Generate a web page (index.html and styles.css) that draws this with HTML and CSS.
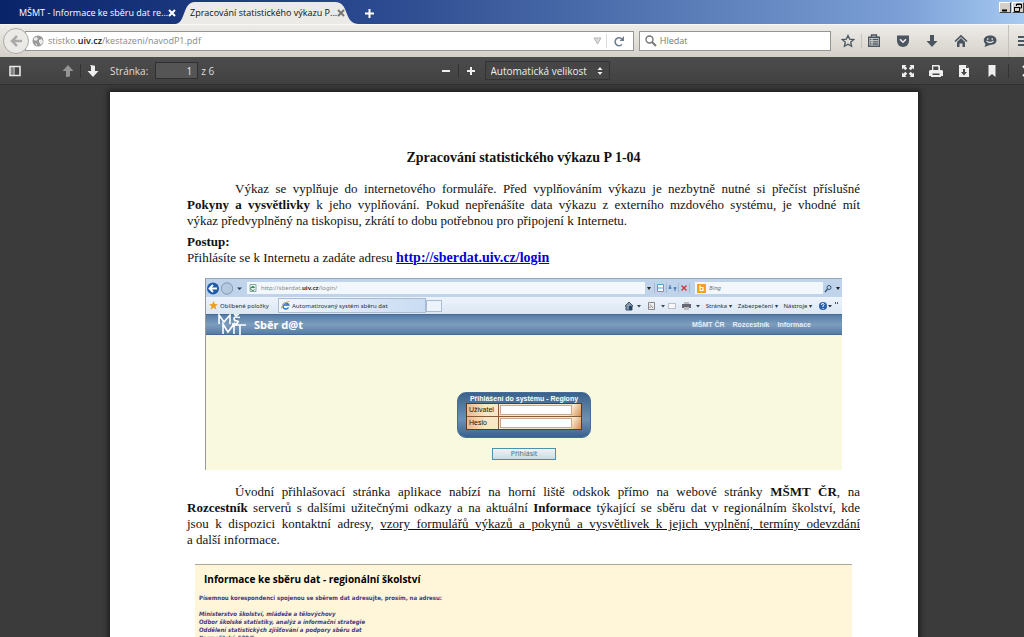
FILE: index.html
```html
<!DOCTYPE html>
<html lang="cs">
<head>
<meta charset="utf-8">
<title>Zpracování statistického výkazu P 1-04</title>
<link rel="stylesheet" href="styles.css">
</head>
<body>
<header class="tabs">
  <div class="tab tab-back"><span class="tab-title">MŠMT - Informace ke sběru dat re...</span><button class="tab-close" aria-label="Zavřít panel"><svg width="8" height="8" viewBox="0 0 8 8"><path d="M1 1l6 6M7 1L1 7" stroke="currentColor" stroke-width="2"/></svg></button></div>
  <div class="tab tab-active">
    <svg class="tab-shape" viewBox="0 0 190 24" preserveAspectRatio="none"><path d="M0 24C11 24 7 2 20 2H160C175 2 168 24 184 24Z" fill="#eceae6"/></svg>
    <span class="tab-title">Zpracování statistického výkazu P...</span><button class="tab-close" aria-label="Zavřít panel"><svg width="8" height="8" viewBox="0 0 8 8"><path d="M1 1l6 6M7 1L1 7" stroke="currentColor" stroke-width="2"/></svg></button>
  </div>
  <button class="tab-new" aria-label="Nový panel"><svg width="9" height="9" viewBox="0 0 9 9"><path d="M4.500 0v9M0 4.500h9" stroke="#fff" stroke-width="2"/></svg></button>
  <div class="window-buttons">
    <button aria-label="Minimalizovat"><svg width="10" height="9" viewBox="0 0 10 9"><path d="M2 7.500h5" stroke="#000" stroke-width="2"/></svg></button>
    <button aria-label="Obnovit"><svg width="10" height="9" viewBox="0 0 10 9"><path d="M3.500 3V1h5v4h-2M3 1.500h6M1.500 4.500h5v4h-5zM1 4.500h6" fill="none" stroke="#000"/></svg></button>
  </div>
</header>

<nav class="navbar">
  <button class="back" aria-label="Zpět"><svg width="14" height="14" viewBox="0 0 14 14"><path d="M8 2L3 7l5 5M3 7h10" fill="none" stroke="#aaa" stroke-width="2.500"/></svg></button>
  <div class="urlbar">
    <svg width="12" height="12" viewBox="0 0 12 12"><circle cx="6" cy="6" r="5.500" fill="#999"/><path d="M2 3l3-1 1 2-2 2-2-1zM7 5l3-1 1 3-2 3-2-3zM3 8l2 1v2z" fill="#eee"/></svg>
    <span class="url">stistko.<b>uiv.cz</b>/kestazeni/navodP1.pdf</span>
    <svg class="drop" width="9" height="8" viewBox="0 0 9 8"><path d="M1 1h7L4.500 7z" fill="#ddd" stroke="#b5b5b5"/></svg>
    <button class="reload" aria-label="Obnovit stránku"><svg width="11" height="11" viewBox="0 0 11 11"><path d="M8 8.500A4 4 0 1 1 8 3" fill="none" stroke="#6f7f8f" stroke-width="1.600"/><path d="M10 0v5H5.500z" fill="#6f7f8f"/></svg></button>
  </div>
  <label class="search"><svg width="12" height="12" viewBox="0 0 12 12"><circle cx="4.500" cy="4.500" r="3.500" fill="none" stroke="#777" stroke-width="1.400"/><path d="M7 7l4 4" stroke="#777" stroke-width="2"/></svg><input type="text" placeholder="Hledat" aria-label="Hledat"></label>
  <div class="tools">
    <button aria-label="Záložka"><svg width="14" height="14" viewBox="0 0 14 14"><path d="M7 1.500l1.700 3.700 4 .4-3 2.700.9 4L7 10.200l-3.600 2.100.9-4-3-2.700 4-.4z" fill="none" stroke="#4a5560" stroke-width="1.300"/></svg></button>
    <button class="ruled" aria-label="Seznam záložek"><svg width="14" height="14" viewBox="0 0 14 14"><path d="M4.500 3V1h5v2M1.700 3.200h10.600v9H1.700z" fill="none" stroke="#4a5560" stroke-width="1.400"/><path d="M3 5.500h1.500M3 7.800h1.500M3 10h1.500M5.500 5.500H11M5.500 7.800H11M5.500 10H11" stroke="#4a5560" stroke-width="1.300"/></svg></button>
    <button aria-label="Pocket"><svg width="14" height="14" viewBox="0 0 14 14"><path d="M1 1.500h12V7a6 6 0 0 1-12 0z" fill="#4a5560"/><path d="M4 5.200l3 3 3-3" fill="none" stroke="#eee" stroke-width="1.600"/></svg></button>
    <button aria-label="Stahování"><svg width="14" height="14" viewBox="0 0 14 14"><path d="M5 1h4v6h3.500L7 13 1.500 7H5z" fill="#4a5560"/></svg></button>
    <button aria-label="Domů"><svg width="14" height="14" viewBox="0 0 14 14"><path d="M1 7.500L7 1.800l6 5.700" fill="none" stroke="#4a5560" stroke-width="1.700"/><path d="M3 8l4-4 4 4v5H8.500V9.500h-3V13H3z" fill="#4a5560"/></svg></button>
    <button aria-label="Hello"><svg width="14" height="14" viewBox="0 0 14 14"><path d="M7 1.500c4 0 6.500 2 6.500 4.800S11 11 7 11L1.500 13 2.500 10C-1 6.500 1 1.500 7 1.500z" fill="#4a5560"/><path d="M3.500 7q3.500 3 7 0" fill="none" stroke="#ddd" stroke-width="1.300"/><path d="M4 5h1.500M8.500 5H10" stroke="#ddd" stroke-width="1.300"/></svg></button>
    <button class="ruled menu" aria-label="Nabídka"><svg width="14" height="14" viewBox="0 0 14 14"><path d="M0 3h14M0 7h14M0 11h14" stroke="#4a5560" stroke-width="2"/></svg></button>
  </div>
</nav>

<div class="pdfbar">
  <div class="pdf-group">
    <button aria-label="Postranní lišta"><svg width="12" height="12" viewBox="0 0 12 12"><path d="M1 1.500h10v9H1z" fill="none" stroke="#e6e6e6" stroke-width="1.600"/><path d="M5 1v10" stroke="#e6e6e6"/><path d="M2 3h2M2 5h2M2 7h2M2 9h2" stroke="#bbb"/></svg></button>
    <button class="prev" aria-label="Předchozí"><svg width="12" height="12" viewBox="0 0 12 12"><path d="M6 0l5.500 6H8v4.500q0 1.500-4 1.500V6H.5z" fill="#949494"/></svg></button>
    <button class="split" aria-label="Další"><svg width="12" height="12" viewBox="0 0 12 12"><path d="M6 12l5.500-6H8V1.500Q8 0 3 0q1 1 1 2v4H.5z" fill="#eee"/></svg></button>
    <label for="page-no">Stránka:</label>
    <input id="page-no" type="text" value="1">
    <span>z 6</span>
  </div>
  <div class="pdf-group zoom">
    <button aria-label="Zmenšit"><svg width="10" height="10" viewBox="0 0 10 10"><path d="M1 5h8" stroke="#eee" stroke-width="2"/></svg></button>
    <button class="split" aria-label="Zvětšit"><svg width="10" height="10" viewBox="0 0 10 10"><path d="M1 5h8M5 1v8" stroke="#eee" stroke-width="2"/></svg></button>
    <div class="select-wrap"><select aria-label="Velikost"><option>Automatická velikost</option></select><svg width="6" height="8" viewBox="0 0 6 8"><path d="M3 0l2.500 3h-5zM3 8L.5 5h5z" fill="#eee"/></svg></div>
  </div>
  <div class="pdf-group right">
    <button aria-label="Režim prezentace"><svg width="14" height="14" viewBox="0 0 14 14"><path d="M1 1h4.500L4.200 2.300l2 2-1.900 1.900-2-2L1 5.500zM13 1H8.500l1.300 1.300-2 2 1.900 1.900 2-2L13 5.500zM1 13h4.500l-1.300-1.300 2-2-1.900-1.900-2 2L1 8.500zM13 13H8.500l1.300-1.300-2-2 1.900-1.900 2 2L13 8.500z" fill="#eee"/></svg></button>
    <button aria-label="Tisk"><svg width="14" height="14" viewBox="0 0 14 14"><path d="M3 1h7l1 1v4h2l1 1v5h-2v1H2v-1H0V7l1-1h2z" fill="#eee"/><path d="M4.300 2.500h5V6h-5zM3.500 9.500h7v1.500h-7z" fill="#484848"/></svg></button>
    <button aria-label="Stáhnout"><svg width="14" height="14" viewBox="0 0 14 14"><path d="M2 1h7l3 3v9H2z" fill="#eee"/><path d="M9 1v3h3M6 5h2v3h2l-3 3.500L4 8h2z" fill="#484848"/></svg></button>
    <button aria-label="Aktuální pohled"><svg width="14" height="14" viewBox="0 0 14 14"><path d="M3.500 1h7v12L7 10l-3.500 3z" fill="#eee"/></svg></button>
    <button class="more split" aria-label="Nástroje"><svg width="14" height="14" viewBox="0 0 14 14"><path d="M2 2l5 5-5 5M8 2l5 5-5 5" fill="none" stroke="#eee" stroke-width="2"/></svg></button>
  </div>
</div>

<main class="viewer">
  <article class="page">
    <h1>Zpracování statistického výkazu P 1-04</h1>
    <p class="para">
      <span class="line indent">Výkaz se vyplňuje do internetového formuláře. Před vyplňováním výkazu je nezbytně nutné si přečíst příslušné</span>
      <span class="line"><b>Pokyny a vysvětlivky</b> k jeho vyplňování. Pokud nepřenášíte data výkazu z externího mzdového systému, je vhodné mít</span>
      <span class="line last">výkaz předvyplněný na tiskopisu, zkrátí to dobu potřebnou pro připojení k Internetu.</span>
    </p>
    <p class="steps"><b>Postup:</b><br>Přihlásíte se k Internetu a zadáte adresu <a href="http://sberdat.uiv.cz/login">http://sberdat.uiv.cz/login</a></p>

    <section class="shot">
      <div class="ie-top">
        <svg width="40" height="13" viewBox="0 0 40 13"><circle cx="7" cy="6.500" r="6" fill="#1f5ba9"/><path d="M7 3L3.500 6.500 7 10M4 6.500h7" fill="none" stroke="#fff" stroke-width="1.800"/><circle cx="21" cy="6.500" r="5.700" fill="#b5c9df" stroke="#8299b5"/><path d="M31 5.500h5L33.500 8z" fill="#245"/></svg>
        <div class="ie-address"><svg width="8" height="8" viewBox="0 0 8 8"><path d="M1 .5h6v7H1z" fill="#e9f2ea" stroke="#8aa"/><path d="M5.500 5.500a2 2 0 1 1 0-2H2" fill="none" stroke="#3a8a5a"/></svg><span>http://sberdat.<b>uiv.cz</b>/login/</span></div>
        <svg width="44" height="10" viewBox="0 0 44 10"><path d="M1 4h4L3 7z" fill="#222"/><path d="M8.500 0v10M20.500 0v10M32.500 0v10M43.500 0v10" stroke="#a9bace"/><path d="M11.500 1.500h6v7h-6zM12 5h5" fill="#fff" stroke="#5aa0c8"/><path d="M24 2v4M22.500 5h3M29 8V4M27.500 5h3" stroke="#2b68a8"/><path d="M35.500 2.500l5 5M40.500 2.500l-5 5" stroke="#c33" stroke-width="1.300"/></svg>
        <div class="ie-search"><svg width="9" height="9" viewBox="0 0 9 9"><path d="M0 0h9v9H0z" fill="#f3a21c"/><path d="M3 1.500v5h3v-3H3" fill="none" stroke="#fff" stroke-width="1.200"/></svg><i>Bing</i></div>
        <svg width="18" height="9" viewBox="0 0 18 9"><circle cx="5" cy="3.500" r="2" fill="none" stroke="#357"/><path d="M3.500 5L1 8" stroke="#357" stroke-width="1.300"/><path d="M12 3h4l-2 3z" fill="#222"/></svg>
      </div>
      <div class="ie-tabs">
        <svg width="9" height="9" viewBox="0 0 9 9"><path d="M4.500 0l1.300 3 3.200.2-2.500 2 .8 3.300-2.800-1.800-2.800 1.800.8-3.300L0 3.200 3.200 3z" fill="#eda023"/></svg>
        <span class="ie-fav">Oblíbené položky</span>
        <div class="ie-tab"><svg width="9" height="9" viewBox="0 0 9 9"><path d="M7.500 6.500a3 3 0 1 1 .2-2.500H2" fill="none" stroke="#2878c0" stroke-width="1.500"/><path d="M0 8Q1 2 9 0" fill="none" stroke="#e5b93f"/></svg>Automatizovaný systém sběru dat</div>
        <div class="ie-blank"></div>
        <svg class="ie-icons" width="76" height="10" viewBox="0 0 76 10"><path d="M1 5l4-4 4 4H8v4H2V5z" fill="#8396ad" stroke="#456"/><path d="M5 5h3v4H5z" fill="#246"/><path d="M13 4h4l-2 2.500zM37 4h4l-2 2.500zM72 4h4l-2 2.500z" fill="#345"/><path d="M24.500 1.500h6v7h-6z" fill="#eee" stroke="#888"/><path d="M26 7V5.500M26 3.500l3 3.500" stroke="#888"/><path d="M44.500 2.500h7v5h-7z" fill="#f7f7f7" stroke="#bbc"/><path d="M58 3h9v4h-9z" fill="#667"/><path d="M60 1h5v2h-5zM60 6h5v3h-5z" fill="#bbb"/></svg>
        <span>Stránka ▾</span><span>Zabezpečení ▾</span><span>Nástroje ▾</span>
        <svg width="22" height="10" viewBox="0 0 22 10"><circle cx="5" cy="5" r="4" fill="#2d61a8"/><path d="M3.500 4q0-2 1.700-1.700Q7 3 5 5v1M5 7v1" fill="none" stroke="#fff"/><path d="M10 4h4l-2 2.500z" fill="#234"/><path d="M17 1l1 1-1 1M19 1l1 1-1 1" fill="none" stroke="#456"/></svg>
      </div>
      <div class="site-bar">
        <svg width="32" height="21" viewBox="0 0 32 21"><path d="M2 10V1l5 7 6-7v9M23 3.500q-6-1.500-6 1t3 2.500-1 3h-4M17 0l2 1.500L22 0M6 20V10l5 8 6-8v10M17 11h12M23 11v10" fill="none" stroke="#fff" stroke-width="1.600"/></svg>
        <strong>Sběr d@t</strong>
        <div class="site-links"><span>MŠMT ČR</span><span>Rozcestník</span><span>Informace</span></div>
      </div>
      <form class="login">
        <div class="login-box">
          <div class="login-title">Přihlášení do systému - Regiony</div>
          <div class="login-grid">
            <label for="user">Uživatel</label><div class="cell"><input id="user" type="text"></div>
            <label for="pass">Heslo</label><div class="cell"><input id="pass" type="password"></div>
          </div>
        </div>
        <button type="button" class="submit">Přihlásit</button>
      </form>
    </section>

    <p class="para after">
      <span class="line indent">Úvodní přihlašovací stránka aplikace nabízí na horní liště odskok přímo na webové stránky <b>MŠMT ČR</b>, na</span>
      <span class="line"><b>Rozcestník</b> serverů s dalšími užitečnými odkazy a na aktuální <b>Informace</b> týkající se sběru dat v regionálním školství, kde</span>
      <span class="line">jsou k dispozici kontaktní adresy, <u>vzory formulářů výkazů a pokynů a vysvětlivek k jejich vyplnění, termíny odevzdání</u></span>
      <span class="line last">a další informace.</span>
    </p>

    <section class="info">
      <h2>Informace ke sběru dat - regionální školství</h2>
      <p class="lead">Písemnou korespondenci spojenou se sběrem dat adresujte, prosím, na adresu:</p>
      <address>Ministerstvo školství, mládeže a tělovýchovy<br>Odbor školské statistiky, analýz a informační strategie<br>Oddělení statistických zjišťování a podpory sběru dat<br>Karmelitská 529/5</address>
    </section>
  </article>
</main>
</body>
</html>
```

FILE: styles.css
```css
* { box-sizing: border-box; }
body {
  margin: 0;
  height: 100vh;
  display: flex;
  flex-direction: column;
  overflow: hidden;
  font: 9px/12px "Open Sans", "Noto Sans", sans-serif;
  color: #222;
}
svg { display: block; flex: none; }
button { display: flex; align-items: center; justify-content: center; padding: 0; border: 0; background: none; color: inherit; font: inherit; flex: none; }
input, select { font: inherit; color: inherit; min-width: 0; }
h1, h2, p { margin: 0; }

/* tab strip */
.tabs {
  display: flex;
  flex: none;
  height: 24px;
  padding-left: 19px;
  background: linear-gradient(90deg, #0a246a, #2c4b90 38%, #5678b4 65%, #7b9fd6 88%, #a6caf0);
  color: #fff;
}
.tab { display: flex; align-items: center; white-space: nowrap; padding-top: 2px; }
.tab-back { width: 156px; justify-content: space-between; }
.tab-active { position: relative; width: 190px; padding: 2px 23px 0 15px; justify-content: space-between; color: #111; }
.tab-shape { position: absolute; inset: 0; width: 100%; height: 100%; }
.tab-active .tab-title, .tab-active .tab-close { position: relative; }
.tab-active .tab-close { color: #777; }
.tab-new { width: 9px; margin-top: 2px; }
.window-buttons { display: flex; gap: 1px; margin-left: auto; height: 13px; padding-top: 2px; }
.window-buttons button { width: 12px; background: #d4d0c8; border: 1px solid; border-color: #fff #404040 #404040 #fff; }

/* navigation bar */
.navbar {
  display: flex;
  align-items: center;
  flex: none;
  height: 33px;
  padding-left: 3px;
  background: linear-gradient(#eeece8, #d5d1c9);
  border-top: 1px solid #f7f6f4;
  overflow: hidden;
}
.back { position: relative; width: 26px; height: 26px; border: 1px solid #aaa; border-radius: 50%; background: #eceae7; }
.urlbar, .search { display: flex; align-items: center; height: 20px; border: 1px solid #979591; background: #fff; color: #888; }
.urlbar { flex: 610 1 0; margin-left: -4px; padding-left: 6px; gap: 4px; }
.url { flex: 1; white-space: nowrap; }
.url b { color: #222; font-weight: 600; }
.reload { width: 27px; height: 14px; border-left: 1px solid #ddd; }
.search { flex: 188 1 0; margin-left: 5px; padding-left: 5px; gap: 3px; }
.search input { flex: 1; border: 0; padding: 0; outline: 0; }
.search input::placeholder { color: #777; opacity: 1; }
.tools { display: flex; align-items: center; flex: none; width: 193px; padding-left: 10px; gap: 15px; }
.tools .ruled { border-left: 1px solid #c4c1ba; padding-left: 5px; margin-left: -9px; }
.tools .menu { height: 32px; margin-left: -4px; padding-left: 9px; }

/* viewer toolbar */
.pdfbar {
  display: grid;
  grid-template-columns: 1fr auto 1fr;
  align-items: center;
  flex: none;
  height: 28px;
  background: linear-gradient(#4c4c4c, #414141);
  border-bottom: 1px solid #303030;
  color: #ddd;
  font-size: 10px;
  overflow: hidden;
}
.pdf-group { display: flex; align-items: center; height: 20px; }
.pdf-group:first-child { padding-left: 9px; }
.prev { margin-left: 41px; }
.pdfbar .split { border-left: 1px solid #333; height: 14px; margin-left: 6px; padding-left: 6px; }
.pdfbar label { margin: 0 7px 0 11px; }
.pdfbar input { width: 43px; height: 17px; margin-right: 3px; padding: 0 5px; border: 1px solid #2f2f2f; background: #555; text-align: right; color: #eee; }
.zoom { margin-left: 26px; }
.zoom .split { margin-left: 7px; padding-left: 7px; }
.select-wrap { display: flex; align-items: center; height: 19px; margin-left: 9px; padding: 0 6px 0 5px; gap: 9px; border: 1px solid #333; background: #454545; color: #eee; }
.select-wrap select { appearance: none; border: 0; padding: 0; background: none; line-height: 14px; }
.right { justify-content: flex-end; gap: 14px; }
.pdfbar .more { margin: 0 -11px 0 -5px; padding-left: 12px; }

/* document */
.viewer { flex: 1; min-height: 0; overflow: hidden; padding: 7px 0 0 4px; background: #3b3b3b; }
.page {
  max-width: 808px;
  margin: 0 auto;
  padding: 58px 58px 0 77px;
  background: #fff;
  box-shadow: 0 0 5px 2px #1c1c1c;
  color: #111;
  font: 13px/16px "Liberation Serif", serif;
}
.page h1 { font-size: 14px; line-height: 16px; text-align: center; margin-bottom: 15px; }
.line { display: block; text-align: justify; text-align-last: justify; white-space: nowrap; }
.line.last { text-align-last: left; }
.indent { padding-left: 48px; }
.steps { margin-top: 5px; }
.steps a { color: #00d; font-size: 14px; font-weight: bold; }
.after { margin-top: 14px; }

/* captured login page */
.shot { margin: 12px 18px 0; border-left: 1px solid #999; background: #f9f9e0; font: 6px/8px "Noto Sans", sans-serif; color: #234; }
.ie-top { display: flex; align-items: center; height: 19px; background: #bfd3ea; border-top: 1px solid #91a9c6; gap: 1px; }
.ie-address { flex: 1; display: flex; align-items: center; gap: 4px; height: 12px; padding-left: 2px; background: #f2f7fc; color: #888; }
.ie-address b { color: #333; }
.ie-search { display: flex; align-items: center; gap: 3px; width: 128px; height: 12px; margin-left: 4px; padding-left: 2px; background: #f2f7fc; color: #777; }
.ie-tabs { display: flex; align-items: center; height: 17px; padding: 0 2px 0 3px; gap: 6px; background: linear-gradient(#edf3fa, #dbe7f4); white-space: nowrap; }
.ie-tabs > svg:first-child { margin-right: -4px; }
.ie-fav { width: 52px; }
.ie-tab { display: flex; align-items: center; gap: 2px; width: 148px; height: 15px; padding-left: 2px; border: 1px solid #a9bcd2; background: linear-gradient(90deg, #f0f6fc, #c9dcf3); }
.ie-blank { width: 16px; height: 12px; margin-left: -6px; border: 1px solid #a9bcd2; background: #edf3fa; }
.ie-icons { margin-left: auto; }
.site-bar { display: flex; align-items: center; height: 21px; padding: 0 31px 0 11px; gap: 5px; background: linear-gradient(#557ca7, #7d9dbd 50%, #557ca7); border-top: 1px solid #476b94; border-bottom: 1px solid #476b94; color: #fff; }
.site-bar strong { font-size: 11px; line-height: 16px; }
.site-links { display: flex; gap: 8px; margin-left: auto; font: bold 7px/8px "Liberation Sans", sans-serif; color: #e8eef5; }
.login { display: flex; flex-direction: column; align-items: center; padding: 57px 0 10px; gap: 10px; }
.login-box { width: 134px; padding: 1px 8px 7px; border-radius: 9px; background: linear-gradient(#3a628c, #6d91b4 60%, #3a628c); border: 1px solid #456d97; }
.login-title { text-align: center; color: #fff; font: bold 7px/9px "Liberation Sans", sans-serif; white-space: nowrap; }
.login-grid { display: grid; grid-template-columns: 31px 1fr; gap: 1px; border: 1px solid #5b3c22; background: #8a5a33; }
.login-grid label { padding: 1px 2px; background: linear-gradient(90deg, #edb98a, #f8e7c6 60%); font: 7px/10px "Liberation Sans", sans-serif; color: #111; }
.cell { display: flex; padding: 1px 9px 1px 1px; background: linear-gradient(120deg, #f8e7c6 85%, #d98b4c); }
.cell input { width: 100%; height: 10px; border: 1px solid #c9a98a; padding: 0; background: #fff; }
.submit { width: 64px; height: 12px; border: 1px solid #4d91b0; background: linear-gradient(#eef3f6, #cddbe3); color: #456f8c; font: 7px/8px "Noto Sans", sans-serif; }

/* captured information page */
.info { margin: 16px 8px 0; min-height: 120px; padding: 8px 4px; border-top: 1px solid #aaa89c; background: #fff6d9; color: #423a78; }
.info h2 { margin-left: 5px; font: bold 10px/13px "Open Sans", "Noto Sans", sans-serif; color: #000; }
.info p, .info address { font: bold 6px/8px "DejaVu Sans Condensed", "DejaVu Sans", sans-serif; }
.lead { margin: 8px 0; }
.info address { font-style: italic; }
```
